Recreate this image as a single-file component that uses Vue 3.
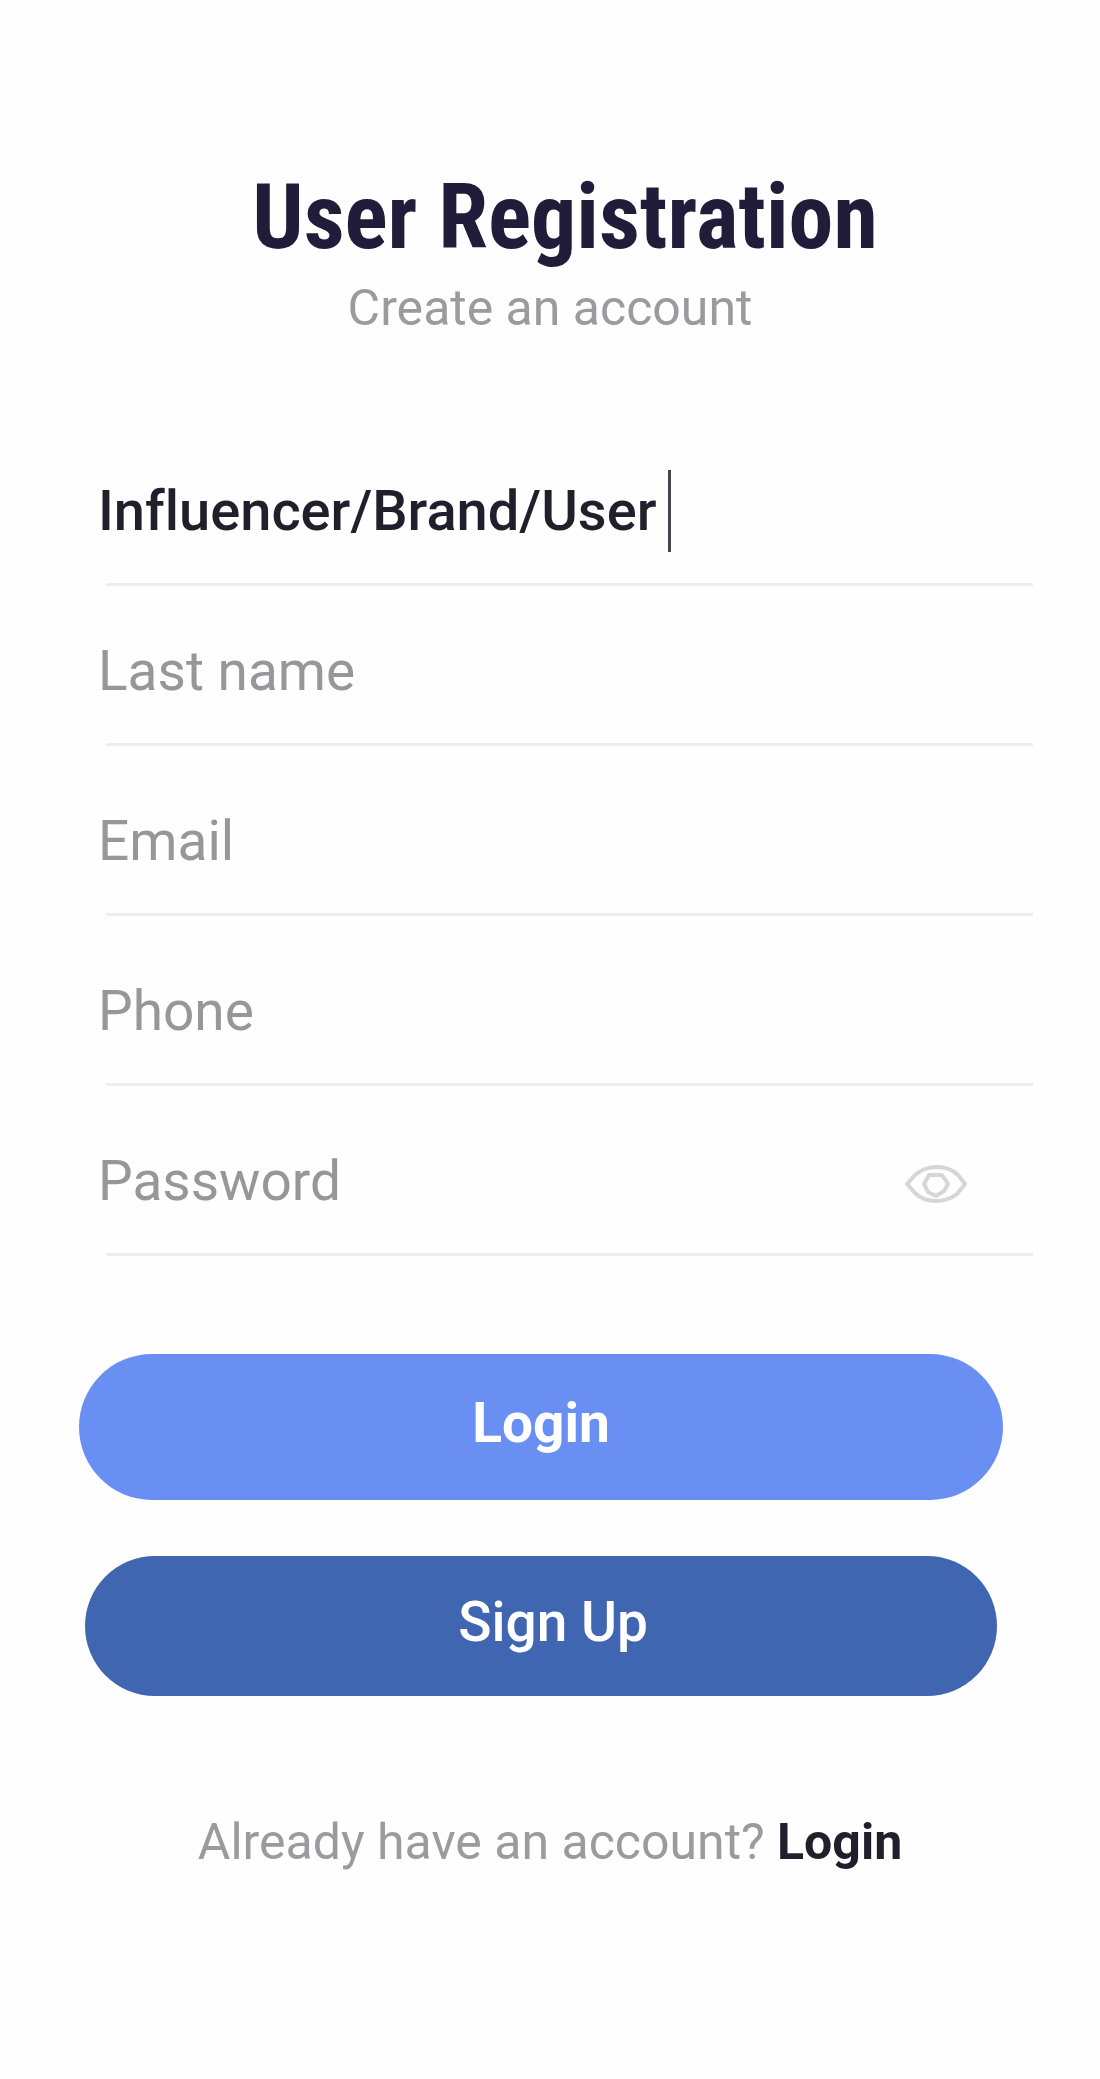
<script setup>
import { ref } from 'vue'

const fields = ref([
  { id: 'account-type', label: 'Account type', type: 'text', placeholder: '', value: 'Influencer/Brand/User', active: true },
  { id: 'last-name', label: 'Last name', type: 'text', placeholder: 'Last name', value: '' },
  { id: 'email', label: 'Email', type: 'email', placeholder: 'Email', value: '' },
  { id: 'phone', label: 'Phone', type: 'tel', placeholder: 'Phone', value: '' },
  { id: 'password', label: 'Password', type: 'password', placeholder: 'Password', value: '', secret: true }
])

function toggleSecret(field) {
  field.type = field.type === 'password' ? 'text' : 'password'
}
</script>

<template>
  <main class="page">
    <header class="heading">
      <h1>User Registration</h1>
      <p>Create an account</p>
    </header>

    <form class="form" @submit.prevent>
      <div v-for="field in fields" :key="field.id" class="field" :class="{ active: field.active }">
        <div class="control">
          <input
            :id="field.id"
            v-model="field.value"
            :type="field.type"
            :placeholder="field.placeholder"
            :aria-label="field.label"
          />
          <span v-if="field.active" class="caret"></span>
          <button
            v-if="field.secret"
            type="button"
            class="reveal"
            aria-label="Show password"
            @click="toggleSecret(field)"
          >
            <svg viewBox="0 0 64 40" width="64" height="40" fill="none" stroke="#d6d6d6" stroke-width="4" stroke-linejoin="round">
              <path d="M3 20 L11 11 Q20 3 33 3 Q46 3 54 11 L61 20 L53 30 Q44 37 32 37 Q19 37 11 29 Z" />
              <path d="M25 11 H38 L44 20 L40 27 L32 32 L24 28 L20 20 Z" />
            </svg>
          </button>
        </div>
      </div>

      <div class="actions">
        <button type="submit" class="login">Login</button>
        <button type="button" class="signup">Sign Up</button>
      </div>
    </form>

    <p class="footer">Already have an account? <a href="#login">Login</a></p>
  </main>
</template>

<style>
body {
  margin: 0;
  background: #fefefe;
}
</style>

<style scoped>
.page {
  box-sizing: border-box;
  padding: 162px 0 200px;
  font-family: Roboto, "Liberation Sans", sans-serif;
  font-variant-ligatures: none;
  background: #fefefe;
}

.heading {
  display: flex;
  flex-direction: column;
  align-items: center;
  text-align: center;
}

h1 {
  margin: 0;
  padding-left: 30px;
  font-family: "Roboto Condensed", "Liberation Sans Narrow", Roboto, sans-serif;
  font-size: 90px;
  line-height: 112px;
  font-weight: 700;
  color: #201c3a;
}

.heading p {
  margin: 4px 0 0;
  font-size: 50px;
  line-height: 60px;
  color: #9b9b9f;
}

.form {
  padding-top: 88px;
}

.field {
  display: flex;
  flex-direction: column;
  justify-content: flex-end;
  height: 170px;
  margin: 0 67px 0 98px;
}

.field:nth-child(-n + 2) {
  height: 160px;
}

.field::after {
  content: "";
  height: 3px;
  margin-left: 8px;
  background: #ededed;
}

.control {
  display: flex;
  align-items: center;
  height: 80px;
  padding-bottom: 32px;
}

input {
  flex: 1;
  min-width: 0;
  height: 80px;
  box-sizing: border-box;
  padding: 0;
  border: 0;
  outline: 0;
  background: transparent;
  font-family: inherit;
  font-size: 55px;
  font-variant-ligatures: none;
  line-height: 80px;
  color: #201f2b;
}

input::placeholder {
  color: #97979b;
  opacity: 1;
}

.active input {
  flex: 0 1 auto;
  field-sizing: content;
  font-size: 56px;
  font-weight: 500;
}

.caret {
  width: 3px;
  height: 82px;
  margin-left: 12px;
  background: #45454b;
}

.reveal {
  display: flex;
  margin-right: 65px;
  padding: 6px 0 0;
  border: 0;
  background: transparent;
}

.actions {
  display: flex;
  flex-direction: column;
  gap: 56px;
  margin: 98px 97px 0 79px;
}

.actions button {
  padding: 0 0 8px;
  border: 0;
  border-radius: 73px;
  font-family: inherit;
  font-size: 55px;
  color: #fff;
}

.actions .login {
  height: 146px;
  background: #698ff3;
  font-weight: 700;
}

.actions .signup {
  height: 140px;
  margin: 0 6px;
  padding-left: 24px;
  background: #4066b1;
  font-weight: 500;
}

.footer {
  margin: 112px 0 0;
  font-size: 50px;
  line-height: 68px;
  text-align: center;
  color: #9b9b9f;
}

.footer a {
  color: #201f2b;
  font-weight: 700;
  text-decoration: none;
}
</style>
